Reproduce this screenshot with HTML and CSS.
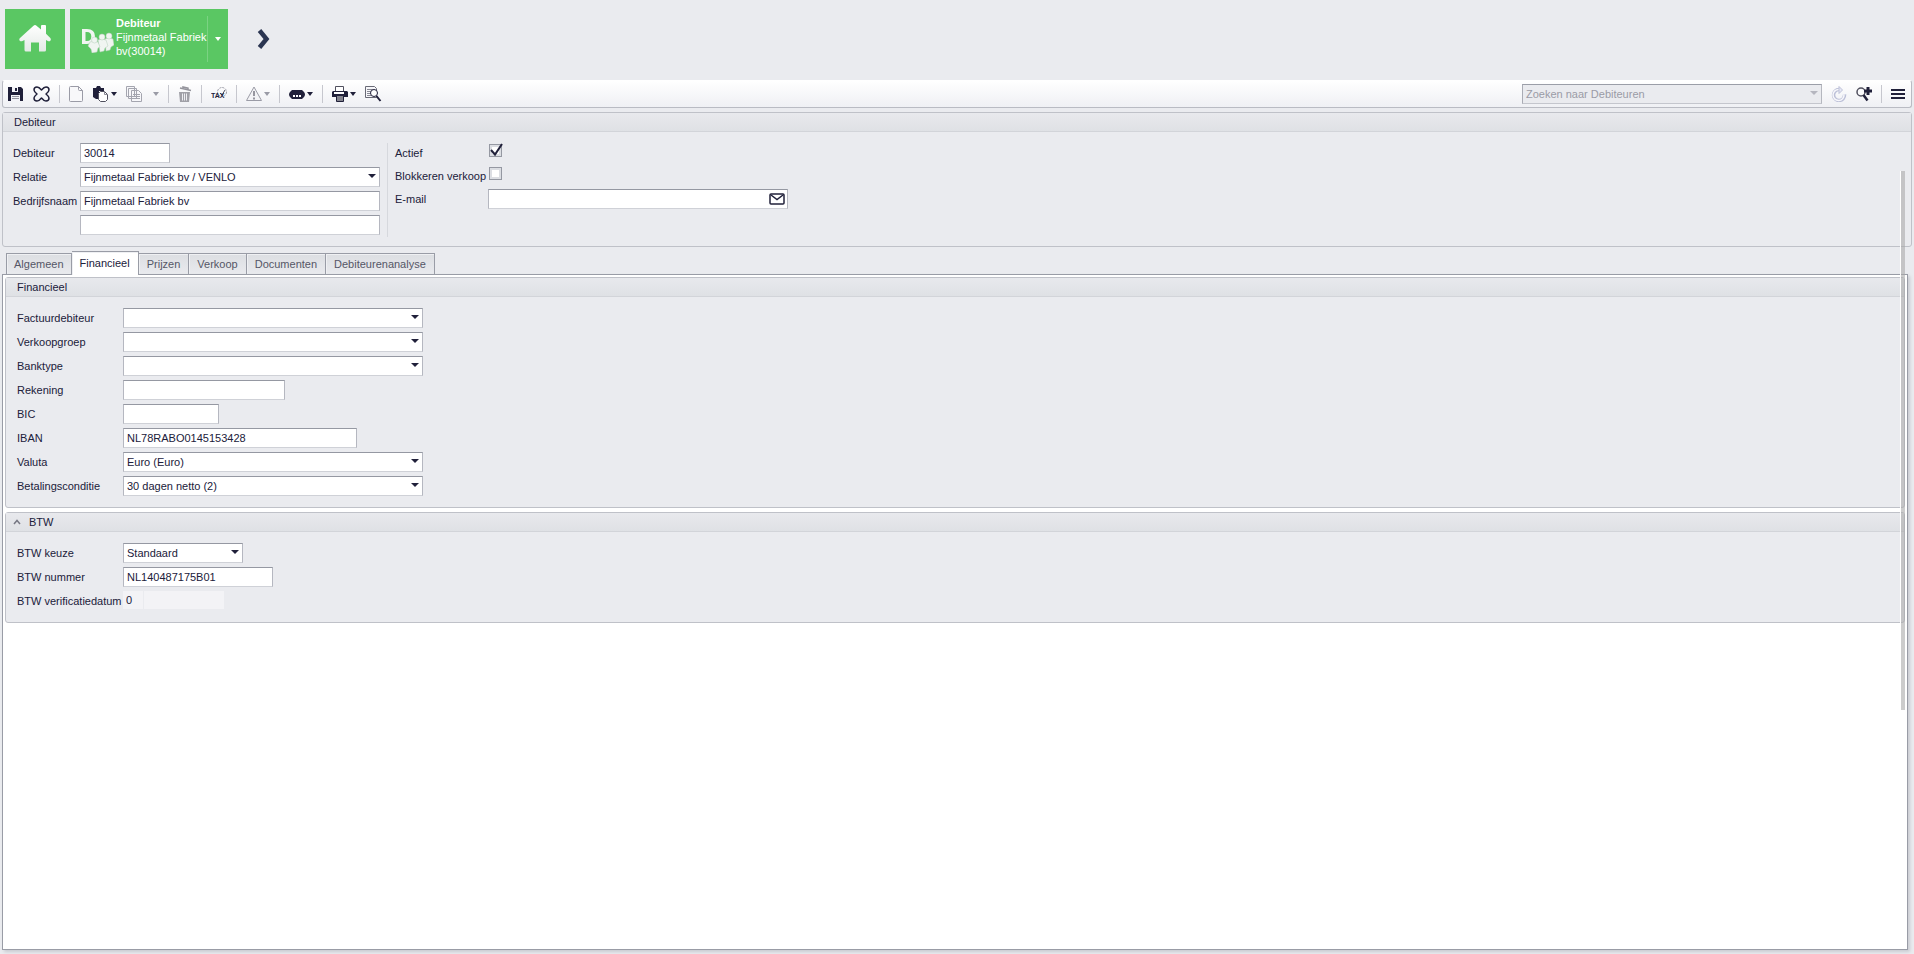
FILE: index.html
```html
<!DOCTYPE html>
<html lang="nl">
<head>
    <meta charset="utf-8">
    <title>Debiteur</title>
    <link rel="stylesheet" href="styles.css">
</head>
<body>
    <header class="topbar">
        <a class="tile tile-home" href="#" aria-label="Home">
            <svg width="32" height="28" viewBox="0 0 32 28">
                <defs>
                    <linearGradient id="home-fill" x1="0" y1="0" x2="0" y2="1">
                        <stop offset="0" stop-color="#ffffff"/>
                        <stop offset="1" stop-color="#e4eae6"/>
                    </linearGradient>
                </defs>
                <path fill="url(#home-fill)" d="M14.500 .7q1.500-1.200 3 0l4.500 3.800V1q0-1 1-1h3q1 0 1 1v7.800l4.300 4.200q1.200 1.600-.2 3-.9.700-2.300 0l-1.800-.9V25q0 1.500-1.500 1.500H20v-9h-8v9H7Q5.500 26.500 5.500 25v-9.900l-2 .9q-1.500.8-2.800-.3-1-1.500.3-2.700z"/>
            </svg>
        </a>
        <div class="tile tile-debtor">
            <svg class="debtor-logo" width="32" height="25" viewBox="0 0 32 25">
                <path fill="#f0f5f1" fill-rule="evenodd" d="M0 1h5q8 0 8 7.500Q13 16 5 16H0zM3.500 4v9H5q4.300 0 4.300-4.500T5 4z"/>
                <g fill="#f0f5f1" stroke="#b5cfbb" stroke-width=".5">
                    <path d="M23 11q4-2 8 0l1 6-3 2-1 3-4 1z"/>
                    <circle cx="27" cy="8" r="3"/>
                    <path d="M16 12q4-2 8 0l2 6-3 2-1 3-4 1z"/>
                    <circle cx="20" cy="9" r="3"/>
                    <path d="M8 14q4-2 8 0l2 5-2 1-1 4-5 1-1-4-3-3z"/>
                    <circle cx="12.500" cy="12" r="3"/>
                </g>
            </svg>
            <a class="debtor-text" href="#"><b>Debiteur</b><br>Fijnmetaal Fabriek<br>bv(30014)</a>
            <button type="button" class="tile-menu" aria-label="Menu"><span class="caret"></span></button>
        </div>
        <button type="button" class="next" aria-label="Volgende">
            <svg width="13" height="22" viewBox="0 0 13 22"><path d="M2.500 2.500L9.500 11l-7 8.500" fill="none" stroke="#2b3551" stroke-width="4.500"/></svg>
        </button>
    </header>

    <nav class="toolbar">
        <button type="button" aria-label="Opslaan">
            <svg width="16" height="16" viewBox="0 0 16 16"><path fill="#20203a" d="M0 1h13l2 2v12H0z"/><path fill="#f4f4f8" d="M4 1h6v5H4zM3 9h9v6H3z"/><path fill="#20203a" d="M7 2h2v3H7z"/><path stroke="#92929e" d="M4 10.500h7M4 12.500h7"/></svg>
        </button>
        <button type="button" aria-label="Annuleren">
            <svg width="17" height="16" viewBox="0 0 17 16"><path fill="none" stroke="#20203a" stroke-width="1.500" stroke-linejoin="round" d="M1 4Q1 1 4 1q2 0 4.500 3Q11 1 13 1q3 0 3 3 0 1.500-3 4 3 2.500 3 4 0 3-3 3-2 0-4.500-3Q6 15 4 15q-3 0-3-3 0-1.500 3-4-3-2.500-3-4z"/></svg>
        </button>
        <span class="sep"></span>
        <button type="button" aria-label="Nieuw">
            <svg width="15" height="16" viewBox="0 0 15 16"><path fill="#f8f8fa" stroke="#9a9ba6" d="M1.500.5h8l4 4v10q0 1-1 1h-11q-1 0-1-1v-13q0-1 1-1zM9.500.5v3q0 1 1 1h3"/></svg>
        </button>
        <button type="button" aria-label="Plakken">
            <svg width="16" height="16" viewBox="0 0 16 16"><path fill="#20203a" d="M0 2h3l1-2h3l1 2h3v3H6v8H3L0 11z"/><path fill="#fff" stroke="#50505e" d="M7.500 5.500h4l3 3v5l-2 2h-5l-2-2v-6z"/><path fill="none" stroke="#8b8b96" d="M11.500 5.500v3h3"/></svg>
            <span class="caret"></span>
        </button>
        <button type="button" class="wide" disabled aria-label="Kopieren">
            <svg width="17" height="16" viewBox="0 0 17 16"><g fill="#f7f7fa" stroke="#a4a5af"><path d="M.5.500h8v10h-8zM2.500 2.500h8v10h-8zM5.500 4.500h7l3 3v8h-10z"/><path d="M7 8.500h7M7 10.500h7M7 12.500h7"/></g></svg>
            <span class="caret"></span>
        </button>
        <span class="sep"></span>
        <button type="button" disabled aria-label="Verwijderen">
            <svg width="14" height="16" viewBox="0 0 14 16"><path fill="none" stroke="#94949c" stroke-width="1.500" d="M2 2l11 2.500M5 2.500V1l5 1v2"/><path fill="#a0a0a7" d="M1 6h11l-1 10H2z"/><path stroke="#eeeef2" d="M4.500 7.500v7M6.500 7.500v7M8.500 7.500v7"/></svg>
        </button>
        <span class="sep"></span>
        <button type="button" aria-label="TAX">
            <svg width="16" height="16" viewBox="0 0 16 16"><circle cx="11" cy="6" r="4.500" fill="none" stroke="#999aa4" stroke-dasharray="2 1"/><path d="M9 7l2 2 3-5" fill="none" stroke="#50505e"/><text class="tax" x="0" y="12">TAX</text></svg>
        </button>
        <span class="sep"></span>
        <button type="button" disabled aria-label="Waarschuwing">
            <svg width="16" height="16" viewBox="0 0 16 16"><path fill="#f3f3f6" stroke="#9a9ba6" stroke-linejoin="round" d="M8 1l7.500 13.500H.5z"/><path stroke="#96969f" stroke-width="2" d="M8 5v5M8 11.500v2"/></svg>
            <span class="caret"></span>
        </button>
        <span class="sep"></span>
        <button type="button" aria-label="Acties">
            <svg width="16" height="16" viewBox="0 0 16 16"><path fill="#20203a" d="M3 4h10l2 2q2 2.500 0 5l-2 2H3l-2-2q-2-2.500 0-5z"/><path stroke="#fff" stroke-width="2" stroke-dasharray="2 1" d="M4 10h8"/></svg>
            <span class="caret"></span>
        </button>
        <span class="sep"></span>
        <button type="button" aria-label="Afdrukken">
            <svg width="16" height="16" viewBox="0 0 16 16"><path fill="#fff" stroke="#50505e" d="M3.500.5h8v5h-8z"/><path fill="#20203a" d="M1 5h14l1 1v5H0V6z"/><path stroke="#fff" stroke-width="2" d="M2 7h10"/><path fill="#85858f" stroke="#20203a" d="M4.500 9.500h7v6h-7z"/></svg>
            <span class="caret"></span>
        </button>
        <button type="button" aria-label="Voorbeeld">
            <svg width="17" height="16" viewBox="0 0 17 16"><path fill="#f7f7fa" stroke="#696a76" d="M.5.500h9l2 2v9H.5z"/><path stroke="#888994" d="M2 3.500h6M2 5.500h4M2 7.500h4M2 9.500h4"/><circle cx="9" cy="7" r="3.500" fill="#fff" stroke="#20203a"/><path stroke="#20203a" stroke-width="2" d="M11.500 10l4 5"/></svg>
        </button>

        <div class="select search">
            <select disabled aria-label="Zoeken"><option>Zoeken naar Debiteuren</option></select>
        </div>
        <button type="button" disabled aria-label="Vernieuwen">
            <svg width="16" height="16" viewBox="0 0 16 16"><path fill="none" stroke="#bcc0d8" stroke-width="3.500" d="M13.500 8.500A5.500 5.500 0 1 1 8 3.500"/><path fill="none" stroke="#f7f7fb" stroke-width="1.500" d="M13 8.500A5.500 5.500 0 1 1 8 3.500"/><path fill="#e6e8f4" stroke="#bcc0d8" d="M8 .5L11.500 4 8 7.500z"/></svg>
        </button>
        <button type="button" aria-label="Uitgebreid zoeken">
            <svg width="16" height="16" viewBox="0 0 16 16"><circle cx="5" cy="6" r="4" fill="#fafafc" stroke="#50505e" stroke-width="1.500"/><path stroke="#20203a" stroke-width="2.500" d="M7.500 9l4 5.500"/><path stroke="#20203a" stroke-width="3" d="M8 5h8M12 1v8"/></svg>
        </button>
        <span class="sep"></span>
        <button type="button" aria-label="Menu">
            <svg width="14" height="16" viewBox="0 0 14 16"><path stroke="#20203a" stroke-width="2" d="M0 4h14M0 8h14M0 12h14"/></svg>
        </button>
    </nav>

    <main>
        <section class="group">
            <h2>Debiteur</h2>
            <div class="columns">
                <div class="fields">
                    <label for="debiteur">Debiteur</label>
                    <input type="text" id="debiteur" class="w90" value="30014">
                    <label for="relatie">Relatie</label>
                    <div class="select"><select id="relatie"><option>Fijnmetaal Fabriek bv / VENLO</option></select></div>
                    <label for="bedrijfsnaam">Bedrijfsnaam</label>
                    <input type="text" id="bedrijfsnaam" value="Fijnmetaal Fabriek bv">
                    <span></span>
                    <input type="text" aria-label="Bedrijfsnaam 2">
                </div>
                <div class="fields status">
                    <label for="actief">Actief</label>
                    <div class="check">
                        <input type="checkbox" id="actief" checked>
                        <svg width="15" height="14" viewBox="0 0 15 14"><path d="M2 7l4 4.500L13 1" fill="none" stroke="#20203a" stroke-width="2"/></svg>
                    </div>
                    <label for="blokkeren">Blokkeren verkoop</label>
                    <div class="check"><input type="checkbox" id="blokkeren"></div>
                    <label for="email">E-mail</label>
                    <div class="mail">
                        <input type="text" id="email">
                        <button type="button" aria-label="E-mail sturen">
                            <svg width="16" height="12" viewBox="0 0 16 12"><rect x="1" y="1" width="14" height="10" rx="1" fill="#fff" stroke="#20203a" stroke-width="1.500"/><path d="M2 2l6 4.500L14 2" fill="none" stroke="#20203a" stroke-width="1.500"/></svg>
                        </button>
                    </div>
                </div>
            </div>
        </section>

        <div class="tabs" role="tablist">
            <button type="button" role="tab">Algemeen</button>
            <button type="button" role="tab" class="active" aria-selected="true">Financieel</button>
            <button type="button" role="tab">Prijzen</button>
            <button type="button" role="tab">Verkoop</button>
            <button type="button" role="tab">Documenten</button>
            <button type="button" role="tab">Debiteurenanalyse</button>
        </div>

        <div class="tab-panel" role="tabpanel">
            <section class="group">
                <h2>Financieel</h2>
                <div class="fields">
                    <label for="factuurdebiteur">Factuurdebiteur</label>
                    <div class="select"><select id="factuurdebiteur"><option></option></select></div>
                    <label for="verkoopgroep">Verkoopgroep</label>
                    <div class="select"><select id="verkoopgroep"><option></option></select></div>
                    <label for="banktype">Banktype</label>
                    <div class="select"><select id="banktype"><option></option></select></div>
                    <label for="rekening">Rekening</label>
                    <input type="text" id="rekening" class="w162">
                    <label for="bic">BIC</label>
                    <input type="text" id="bic" class="w96">
                    <label for="iban">IBAN</label>
                    <input type="text" id="iban" class="w234" value="NL78RABO0145153428">
                    <label for="valuta">Valuta</label>
                    <div class="select"><select id="valuta"><option>Euro (Euro)</option></select></div>
                    <label for="conditie">Betalingsconditie</label>
                    <div class="select"><select id="conditie"><option>30 dagen netto (2)</option></select></div>
                </div>
            </section>
            <section class="group">
                <h2>
                    <button type="button" class="collapse" aria-label="Inklappen"><svg width="8" height="6" viewBox="0 0 8 6"><path d="M1 5l3-3.500L7 5" fill="none" stroke="#777884" stroke-width="1.500"/></svg></button>BTW
                </h2>
                <div class="fields">
                    <label for="btw-keuze">BTW keuze</label>
                    <div class="select w120"><select id="btw-keuze"><option>Standaard</option></select></div>
                    <label for="btw-nummer">BTW nummer</label>
                    <input type="text" id="btw-nummer" class="w150" value="NL140487175B01">
                    <label for="btw-datum">BTW verificatiedatum</label>
                    <div class="readonly">
                        <input type="text" id="btw-datum" value="0" readonly>
                        <output for="btw-datum"></output>
                    </div>
                </div>
            </section>
        </div>
        <div class="scrollbar"></div>
    </main>
</body>
</html>
```
FILE: styles.css
```css
* {
    box-sizing: border-box;
}
body {
    margin: 0;
    min-height: 100vh;
    display: flex;
    flex-direction: column;
    background: #eaebef;
    color: #20203a;
    font: 11px/14px "Liberation Sans", Arial, sans-serif;
}
button, input, select {
    font: inherit;
    color: inherit;
}
button {
    padding: 0;
    border: 0;
    background: none;
    cursor: pointer;
}
svg {
    display: block;
    flex: none;
}
.caret {
    border: 3px solid transparent;
    border-top: 4px solid #20203a;
    border-bottom: 0;
}

/* header tiles */
.topbar {
    display: flex;
    align-items: center;
    gap: 5px;
    height: 80px;
    padding: 0 5px 2px;
}
.tile {
    height: 60px;
    display: flex;
    align-items: center;
    background: #5ac763;
    color: #fff;
}
.tile-home {
    width: 60px;
    justify-content: center;
}
.tile-debtor {
    width: 158px;
}
.debtor-logo {
    margin: 2px 2px 0 12px;
}
.debtor-text {
    width: 92px;
    height: 46px;
    border-right: 1px solid #7bd383;
    color: #fff;
    text-decoration: none;
    white-space: nowrap;
}
.tile-menu {
    flex: 1;
    height: 60px;
    display: flex;
    align-items: center;
    justify-content: center;
}
.tile-menu .caret {
    border-top-color: #fff;
}
.next {
    margin-left: 24px;
}

/* toolbar */
.toolbar {
    display: flex;
    align-items: center;
    gap: 9px;
    height: 28px;
    margin: 0 2px 4px;
    padding: 0 6px 0 5px;
    border: 1px solid #b9bbc3;
    border-top-color: #fff;
    border-radius: 3px;
    background: linear-gradient(#fff, #eff0f4);
}
.toolbar button {
    display: flex;
    align-items: center;
    gap: 2px;
}
.toolbar .wide {
    gap: 10px;
}
.toolbar button:disabled .caret {
    border-top-color: #9a9ba6;
}
.sep {
    width: 1px;
    height: 18px;
    background: #c6c7ce;
}
.tax {
    font: bold 7px "Liberation Sans", Arial, sans-serif;
    fill: #20203a;
}

/* groups and fields */
main {
    position: relative;
    flex: 1;
    display: flex;
    flex-direction: column;
    padding: 0 2px 4px;
}
.group {
    border: 1px solid #bfc1c8;
    border-radius: 3px;
    background: #eaebef;
}
h2 {
    display: flex;
    align-items: center;
    height: 19px;
    margin: 0;
    padding: 0 11px;
    border-bottom: 1px solid #d2d4d9;
    background: linear-gradient(#e8e9ed, #dfe1e5);
    font-size: 11px;
    font-weight: normal;
}
.collapse {
    margin: 0 8px 0 -4px;
}
.fields {
    display: grid;
    grid-template-columns: 106px 300px;
    gap: 4px 0;
    padding: 11px;
    grid-auto-rows: 20px;
    align-content: start;
}
.fields label {
    line-height: 21px;
    white-space: nowrap;
}
.columns {
    display: flex;
    padding: 11px 10px 9px;
}
.columns .fields {
    grid-template-columns: 67px 300px;
    padding: 0 7px 2px 0;
}
.columns .status {
    grid-template-columns: 93px 300px;
    row-gap: 3px;
    padding-left: 7px;
    border-left: 1px solid #d6d8dd;
}
input[type="text"], select {
    width: 100%;
    height: 20px;
    padding: 0 3px;
    border: 1px solid #b5b7c0;
    border-top-color: #9598a2;
    border-bottom-color: #cfd1d7;
    border-radius: 0;
    background: #fff;
    outline: 0;
}
select {
    display: block;
    appearance: none;
}
.select {
    position: relative;
    width: 300px;
}
.select::after {
    content: "";
    position: absolute;
    top: 7px;
    right: 4px;
    border: 4px solid transparent;
    border-top-color: #20203a;
    border-bottom: 0;
    pointer-events: none;
}
.toolbar .search {
    margin-left: auto;
}
.search select {
    background: #eaebef;
    border-color: #9b9ea8 #b5b7bf #c4c6cd #a9abb4;
    color: #9a9ba6;
    opacity: 1;
}
.search::after {
    border-top-color: #b5b6bf;
}
input.w90 { width: 90px; }
input.w96 { width: 96px; }
.select.w120 { width: 120px; }
input.w150 { width: 150px; }
input.w162 { width: 162px; }
input.w234 { width: 234px; }

.check {
    position: relative;
    padding: 1px 0 0 1px;
}
.check input {
    display: block;
    width: 13px;
    height: 13px;
    margin: 0;
    appearance: none;
    border: 1px solid #9598a2;
    background: #fff;
    box-shadow: inset 0 0 0 2px #dcdee3;
}
.check svg {
    position: absolute;
    top: 0;
    left: 1px;
    pointer-events: none;
}
.mail {
    position: relative;
}
.mail button {
    position: absolute;
    top: 4px;
    right: 3px;
}
.readonly {
    display: flex;
    gap: 1px;
    height: 18px;
}
.readonly input[type="text"] {
    width: 20px;
    height: 18px;
    border: 0;
    background: #f3f3f6;
}
.readonly output {
    width: 80px;
    background: #f3f3f6;
}

/* tabs */
.tabs {
    display: flex;
    align-items: flex-end;
    height: 27px;
    padding-left: 4px;
}
.tabs button {
    height: 21px;
    padding: 0 8px;
    border: 1px solid #999ca6;
    border-width: 1px 1px 0 0;
    background: linear-gradient(#dcdee2, #e9eaee);
    box-shadow: inset 1px 1px #eff0f3;
    color: #555666;
}
.tabs button:first-child {
    padding: 0 7px;
    border-left-width: 1px;
}
.tabs .active {
    height: 24px;
    margin-bottom: -1px;
    padding: 0 8px 2px;
    background: #fff;
    color: #20203a;
    z-index: 1;
}
.tab-panel {
    flex: 1;
    display: flex;
    flex-direction: column;
    gap: 4px;
    margin-right: 4px;
    padding: 2px;
    border: 1px solid #999ca6;
    background: #fff;
    box-shadow: 2px 2px 3px #c9cbd1;
}
.scrollbar {
    position: absolute;
    top: 59px;
    right: 9px;
    width: 5px;
    height: 64%;
    border-left: 1px solid #fff;
    background: rgba(170, 170, 170, 0.6);
}
```
